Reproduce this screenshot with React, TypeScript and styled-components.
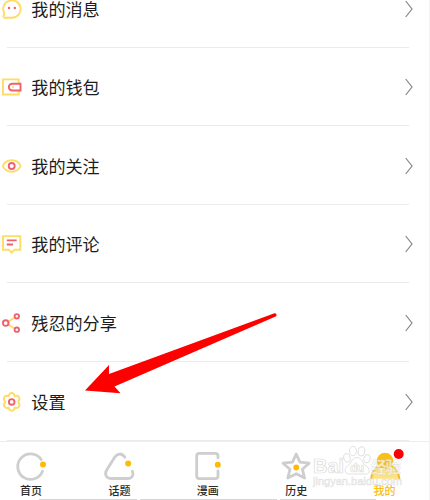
import React from "react";
import styled, { createGlobalStyle } from "styled-components";

const GlobalStyle = createGlobalStyle`
  * { box-sizing: border-box; }
  html, body { margin: 0; padding: 0; overflow: hidden; background: #fff; }
`;

const Screen = styled.div`
  position: relative;
  display: flex;
  flex-direction: column;
  width: 430px;
  height: 500px;
  overflow: hidden;
  background: #fff;
  border-right: 1px solid #f1f2f6;
  font-family: "Noto Sans CJK SC", sans-serif;
`;

const Menu = styled.main`
  flex: none;
  height: 441px;
  overflow: hidden;
`;

const MenuList = styled.div`
  margin-top: -30.9px;
`;

const MenuRow = styled.div`
  display: flex;
  flex-direction: column;
  height: 78.6px;
`;

const RowBody = styled.div`
  display: flex;
  align-items: center;
  flex: 1;
  padding: 1.5px 16px 0 1px;
`;

const RowIcon = styled.svg`
  flex: none;
  width: 21px;
  height: 22px;
  fill: none;
  stroke-width: 1.9;
`;

const RowLabel = styled.span`
  flex: 1;
  margin-left: 9.3px;
  color: #1c1c1c;
  font-size: 17.1px;
  line-height: 24px;
`;

const Chevron = styled.svg`
  width: 8px;
  height: 18px;
  fill: none;
  stroke: #858585;
  stroke-width: 1.2;
`;

const Divider = styled.div`
  flex: none;
  height: 1px;
  margin: 0 20px 0 7px;
  background: #ebebeb;
`;

const TabBar = styled.nav`
  display: grid;
  grid-template-columns: repeat(5, 88.4px);
  flex: none;
  height: 58px;
  margin-left: -13.2px;
  border-top: 1px solid #ededed;
`;

const Tab = styled.div<{ $active?: boolean }>`
  display: flex;
  flex-direction: column;
  align-items: center;
  padding-top: 7px;
  color: ${(p) => (p.$active ? "#fbbd18" : "#2b2b2b")};
  font-size: 11px;
  font-weight: 500;
  line-height: 16px;
`;

const TabIcon = styled.svg`
  flex: none;
  width: 36px;
  height: 33px;
  overflow: visible;
  fill: none;
  stroke: #cecece;
  stroke-width: 2.8;
  stroke-linecap: round;
  stroke-linejoin: round;
`;

const Footer = styled.div`
  display: grid;
  grid-template-columns: 98px 137px 96px;
  gap: 3px;
  height: 1px;
  margin-left: 39px;
`;

const FooterLine = styled.div`
  background: #d6d6d6;
`;

const Overlay = styled.svg`
  position: absolute;
  left: 0;
  top: 0;
  width: 430px;
  height: 500px;
  pointer-events: none;
`;

const YELLOW = "#ffdc66";
const RED = "#f0616d";
const AMBER = "#ffb90b";

const rows = [
  {
    label: "我的消息",
    icon: (
      <>
        <path d="M2 19.2 3.4 15.4A8.7 8.7 0 1 1 11 19.7H2.4" stroke={YELLOW} />
        <circle cx="8" cy="10" r="1.2" fill={RED} />
        <circle cx="13.8" cy="10" r="1.2" fill={RED} />
      </>
    ),
  },
  {
    label: "我的钱包",
    icon: (
      <>
        <path d="M17.7 7V3.4H2V18.5H17.7V15" stroke={YELLOW} />
        <path d="M19.5 7.7H11.2A3.4 3.4 0 0 0 11.2 14.5H19.5Z" stroke={RED} />
        <circle cx="12" cy="11.1" r="1.1" fill={YELLOW} />
      </>
    ),
  },
  {
    label: "我的关注",
    icon: (
      <>
        <path d="M1.8 11C5 3.4 16.4 3.4 19.6 11C16.4 18.6 5 18.6 1.8 11Z" stroke={YELLOW} />
        <circle cx="10.7" cy="11" r="3" stroke={RED} />
      </>
    ),
  },
  {
    label: "我的评论",
    icon: (
      <>
        <path d="M2 3.1H19.3V16.7H13.5L10.7 19.7 7.8 16.7H2Z" stroke={YELLOW} />
        <path d="M5.8 7.4H15.7M5.8 11.5H12" stroke={RED} />
      </>
    ),
  },
  {
    label: "残忍的分享",
    icon: (
      <>
        <path d="M7.3 9.7 13.3 5.8M7.3 12.6 13.3 16.2" stroke={YELLOW} />
        <circle cx="4.7" cy="11.1" r="2.8" stroke={RED} />
        <circle cx="15.8" cy="4.3" r="2.2" stroke={RED} />
        <circle cx="15.8" cy="17.7" r="2.2" stroke={RED} />
      </>
    ),
  },
  {
    label: "设置",
    icon: (
      <>
        <path
          d="M7.7 5.2C8.3 1 13.1 1 13.7 5.2C17.6 3.6 20.1 7.6 17 10.8C20.1 14.2 17.6 18.2 13.7 16.6C13.1 20.8 8.3 20.8 7.7 16.6C3.8 18.2 1.3 14.2 4.4 10.8C1.3 7.6 3.8 3.6 7.7 5.2Z"
          stroke={YELLOW}
          strokeLinejoin="round"
        />
        <circle cx="10.7" cy="10.9" r="2.8" stroke={RED} />
      </>
    ),
  },
];

const tabs = [
  {
    label: "首页",
    icon: (
      <>
        <path d="M28.2 10.5A12.8 12.8 0 1 0 29.5 22.2" />
        <circle cx="30" cy="15.5" r="3" fill={AMBER} stroke="none" />
      </>
    ),
  },
  {
    label: "话题",
    icon: (
      <>
        <path d="M23.9 8.2C20.8 3.7 16.5 4.2 13.7 8.3L6 20.5C3 25.2 5.1 29.5 10 29.5H27C31.3 29.5 33 25.5 31.4 22.3" />
        <circle cx="27.2" cy="14.5" r="3" fill={AMBER} stroke="none" />
      </>
    ),
  },
  {
    label: "漫画",
    icon: (
      <>
        <path d="M28 8.8V7Q28 4.3 25.3 4.3H9.4Q6.7 4.3 6.7 7V27Q6.7 29.7 9.4 29.7H25.3Q28 29.7 28 27V22" />
        <circle cx="27.8" cy="15.8" r="3" fill={AMBER} stroke="none" />
      </>
    ),
  },
  {
    label: "历史",
    icon: (
      <>
        <path d="M18.2 5 21.9 13.2 31.1 14.2 24.4 20.2 26.6 29.1 18.2 24.7 9.8 29.1 12 20.2 5 14.2 14.5 13.2Z" />
        <circle cx="18.2" cy="18.5" r="2.9" fill={AMBER} stroke="none" />
      </>
    ),
  },
  {
    label: "我的",
    active: true,
    icon: (
      <>
        <path d="M4 29.8C5 23.7 8 19.3 11.5 17.5H25C28.7 19.3 31.5 23.7 32.5 29.8Z" fill="#ffe27c" stroke="none" />
        <path d="M4 29.8C5 23.7 8 19.3 11.5 17.5H25C28.7 19.3 31.5 23.7 32.5 29.8" stroke="#f3bb2c" strokeWidth="2" strokeLinecap="butt" />
        <circle cx="18" cy="12" r="8.3" fill="#f9bf1d" stroke="none" />
        <circle cx="31.7" cy="5" r="5" fill="#fb0006" stroke="none" />
      </>
    ),
  },
];

const Watermark = () => (
  <g fill="#fff" fillOpacity="0.55" stroke="#cccccc" strokeOpacity="0.75" strokeWidth="0.8">
    <ellipse cx="347" cy="457.8" rx="3.2" ry="4.2" transform="rotate(-15 347 457.8)" />
    <ellipse cx="353" cy="451" rx="3.4" ry="4.8" />
    <ellipse cx="361.5" cy="451.3" rx="3.3" ry="4.6" transform="rotate(12 361.5 451.3)" />
    <ellipse cx="367" cy="458.7" rx="3.1" ry="4.2" transform="rotate(15 367 458.7)" />
    <path d="M357 457.5C352 457.5 351.5 463 347.5 466C342.5 470 346 475 350.5 474H364C370 475 371 469 366 466C362 463 362 457.5 357 457.5Z" />
    <g fontFamily="Liberation Sans, sans-serif">
      <text x="313" y="473" fontSize="20" fontWeight="700" strokeWidth="0.7" textLength="31" lengthAdjust="spacingAndGlyphs">Bai</text>
      <text x="350" y="471.5" fontSize="12" fontWeight="700" strokeWidth="0.6" textLength="14">du</text>
      <text x="313" y="485" fontSize="11" strokeWidth="0.6" strokeOpacity="0.6" textLength="89" lengthAdjust="spacingAndGlyphs">jingyan.baidu.com</text>
    </g>
    <text x="371" y="472.5" fontFamily="Noto Sans CJK SC, sans-serif" fontSize="15.5" fontWeight="700" fillOpacity="0.7" strokeWidth="0.4" textLength="30">经验</text>
  </g>
);

export default function App() {
  return (
    <>
      <GlobalStyle />
      <Screen>
        <Menu>
          <MenuList>
            {rows.map((row) => (
              <MenuRow key={row.label}>
                <RowBody>
                  <RowIcon viewBox="0 0 21 22">{row.icon}</RowIcon>
                  <RowLabel>{row.label}</RowLabel>
                  <Chevron viewBox="0 0 8 18">
                    <path d="M.7 1 7 9 .7 17" />
                  </Chevron>
                </RowBody>
                <Divider />
              </MenuRow>
            ))}
          </MenuList>
        </Menu>
        <TabBar>
          {tabs.map((tab) => (
            <Tab key={tab.label} $active={tab.active}>
              <TabIcon viewBox="0 0 36 33">{tab.icon}</TabIcon>
              {tab.label}
            </Tab>
          ))}
        </TabBar>
        <Footer>
          <FooterLine />
          <FooterLine />
          <FooterLine />
        </Footer>
        <Overlay viewBox="0 0 430 500">
          <Watermark />
          <path
            d="M85 390.5 109 365V374L274.5 313.2Q277.5 313.5 276.2 316.2L114.5 386.5 120.5 393.2Z"
            fill="#fe0000"
          />
        </Overlay>
      </Screen>
    </>
  );
}
